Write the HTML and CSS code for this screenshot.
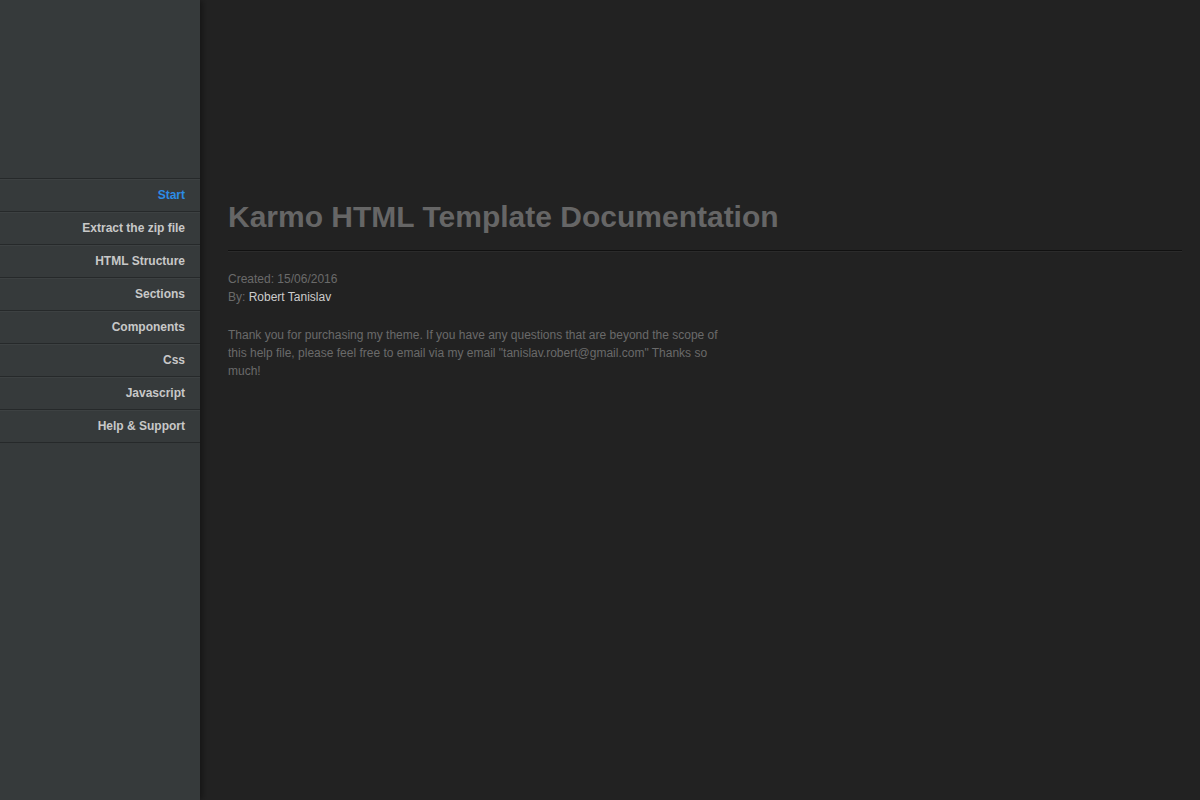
FILE: index.html
```html
<!DOCTYPE html>
<html>
<head>
<meta charset="utf-8">
<link rel="stylesheet" href="styles.css">
</head>
<body>
<div class="layout">
  <aside class="sidebar">
    <nav class="nav">
      <a class="nav-item active" href="#">Start</a>
      <a class="nav-item" href="#">Extract the zip file</a>
      <a class="nav-item" href="#">HTML Structure</a>
      <a class="nav-item" href="#">Sections</a>
      <a class="nav-item" href="#">Components</a>
      <a class="nav-item" href="#">Css</a>
      <a class="nav-item" href="#">Javascript</a>
      <a class="nav-item" href="#">Help &amp; Support</a>
    </nav>
  </aside>
  <main class="content">
    <h1 class="title">Karmo HTML Template Documentation</h1>
    <hr class="rule">
    <div class="meta">
      <div>Created: 15/06/2016</div>
      <div>By: <span class="author">Robert Tanislav</span></div>
    </div>
    <p class="intro">Thank you for purchasing my theme. If you have any questions that are beyond the scope of this help file, please feel free to email via my email "tanislav.robert@gmail.com" Thanks so much!</p>
  </main>
</div>
</body>
</html>
```
FILE: styles.css
```css
html, body {
  margin: 0;
  padding: 0;
  height: 100%;
  background: #222222;
  font-family: "Liberation Sans", Arial, sans-serif;
}
.layout {
  display: flex;
  min-height: 100vh;
}
.sidebar {
  width: 200px;
  flex: none;
  background: #363a3b;
  box-shadow: 2px 0 7px rgba(0, 0, 0, 0.45);
  padding-top: 178px;
  position: relative;
  z-index: 1;
}
.nav {
  display: flex;
  flex-direction: column;
  border-top: 1px solid #26292a;
}
.nav-item {
  display: block;
  height: 32px;
  line-height: 32px;
  padding-right: 15px;
  text-align: right;
  font-size: 12px;
  font-weight: bold;
  color: #c8c8c8;
  text-decoration: none;
  border-bottom: 1px solid #26292a;
  box-shadow: inset 0 1px 0 #3d4142;
}
.nav-item.active {
  color: #2c8ce6;
}
.content {
  flex: 1;
  padding: 199px 18px 0 28px;
}
.title {
  margin: 0;
  font-size: 30px;
  line-height: 35px;
  font-weight: bold;
  color: #666666;
}
.rule {
  margin: 16px 0 0;
  height: 0;
  border: 0;
  border-top: 1px solid #111111;
  border-bottom: 1px solid #2b2b2b;
}
.meta {
  margin-top: 18px;
  font-size: 12px;
  line-height: 18px;
  color: #6a6a6a;
}
.author {
  color: #cccccc;
}
.intro {
  margin: 20px 0 0;
  max-width: 500px;
  font-size: 12px;
  line-height: 18px;
  color: #6a6a6a;
}
```
